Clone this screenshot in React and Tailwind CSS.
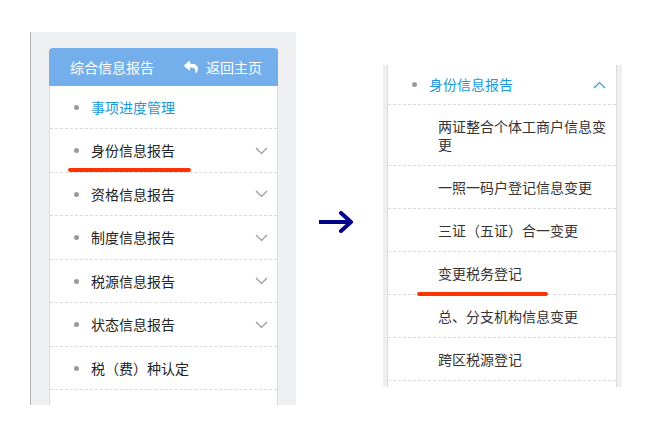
import { FaReply } from "react-icons/fa";

const font = { fontFamily: '"Noto Sans CJK SC", "Noto Sans", sans-serif' };

const leftRows = [
  { label: "事项进度管理", h: "h-[43px]", active: true },
  { label: "身份信息报告", h: "h-[44px]", chevron: true, mark: true },
  { label: "资格信息报告", h: "h-[43px]", chevron: true },
  { label: "制度信息报告", h: "h-[44px]", chevron: true },
  { label: "税源信息报告", h: "h-[43px]", chevron: true },
  { label: "状态信息报告", h: "h-[44px]", chevron: true },
  { label: "税（费）种认定", h: "h-[43px]" },
];

const subRows = [
  { label: "两证整合个体工商户信息变更", h: "h-[61px]" },
  { label: "一照一码户登记信息变更", h: "h-[43px]" },
  { label: "三证（五证）合一变更", h: "h-[43px]" },
  { label: "变更税务登记", h: "h-[43px]", mark: true },
  { label: "总、分支机构信息变更", h: "h-[43px]" },
  { label: "跨区税源登记", h: "h-[43px]" },
];

function Chevron({ up, color }) {
  return (
    <svg width="13" height="8" viewBox="0 0 13 8" fill="none">
      <polyline
        points={up ? "1,7 6.5,1.5 12,7" : "1,1 6.5,6.5 12,1"}
        stroke={color}
        strokeWidth="1.2"
      />
    </svg>
  );
}

function Dot() {
  return <span className="w-[5px] h-[5px] rounded-full bg-[#9a9a9a] shrink-0" />;
}

export default function App() {
  return (
    <div className="w-[670px] h-[428px] bg-white flex items-start" style={font}>
      {/* left: main menu */}
      <div className="ml-[30px] mt-[32px] w-[266px] h-[373px] bg-[#eff0f2] border-l border-[#b0b0b0] pl-[18px] pr-[18px] pt-[16px]">
        <div className="h-full bg-white border-x border-[#dddddd] flex flex-col">
          <div className="h-[38px] -mx-px bg-[#74afeb] rounded-t-[4px] flex items-center justify-between pl-[21px] pr-[16px] text-white text-[14px]">
            <span>综合信息报告</span>
            <span className="flex items-center gap-[8px]">
              <FaReply className="w-[14px] h-[14px]" />
              <span>返回主页</span>
            </span>
          </div>
          {leftRows.map((r) => (
            <div
              key={r.label}
              className={`relative ${r.h} shrink-0 flex items-center border-b border-dashed border-[#dadada] pl-[24px] pr-[9px] text-[14px]`}
            >
              <Dot />
              <span className={`ml-[12px] flex-1 ${r.active ? "text-[#1a9ad6]" : "text-[#222222]"}`}>
                {r.label}
              </span>
              {r.chevron && <Chevron color="#999999" />}
              {r.mark && (
                <span className="absolute left-[18px] bottom-0 w-[123px] h-[4px] rounded-full bg-[#ff3300]" />
              )}
            </div>
          ))}
        </div>
      </div>

      {/* arrow */}
      <div className="ml-[22px] mt-[211px]">
        <svg width="36" height="22" viewBox="0 0 36 22" fill="none">
          <path d="M1 11 H32" stroke="#000088" strokeWidth="4" />
          <path d="M23 2 L33 11 L23 20" stroke="#000088" strokeWidth="4" strokeLinecap="round" strokeLinejoin="round" />
        </svg>
      </div>

      {/* right: expanded submenu */}
      <div className="ml-[29px] mt-[65px] w-[239px] h-[322px] bg-[#eeeff1] pl-[4px] pr-[5px] overflow-hidden">
        <div className="h-full bg-white border-x border-[#dcdcdc] flex flex-col">
          <div className="h-[40px] shrink-0 flex items-center border-b border-dashed border-[#dadada] pl-[24px] pr-[10px] text-[14px]">
            <Dot />
            <span className="ml-[12px] flex-1 text-[#1a9ad6]">身份信息报告</span>
            <Chevron up color="#2a9fd6" />
          </div>
          {subRows.map((r) => (
            <div
              key={r.label}
              className={`relative ${r.h} shrink-0 flex items-center border-b border-dashed border-[#dadada] pl-[50px] pr-[10px] text-[14px] leading-[18px] text-[#333333]`}
            >
              <span>{r.label}</span>
              {r.mark && (
                <span className="absolute left-[29px] bottom-[-2px] w-[131px] h-[4px] rounded-full bg-[#ff3300]" />
              )}
            </div>
          ))}
        </div>
      </div>
    </div>
  );
}
